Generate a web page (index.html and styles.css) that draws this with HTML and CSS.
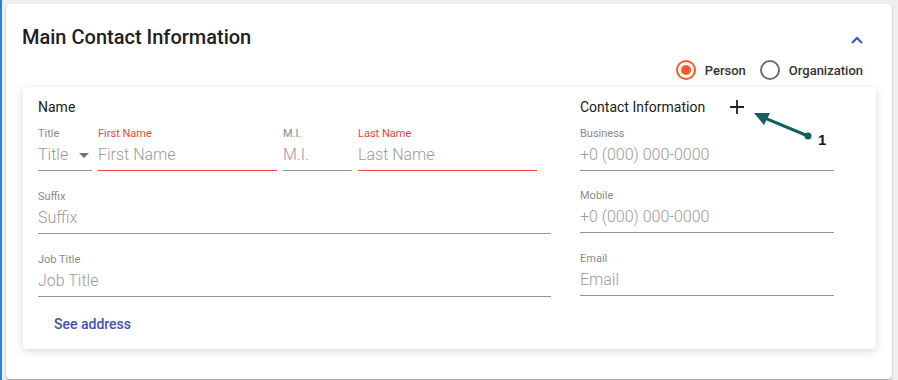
FILE: index.html
```html
<!DOCTYPE html>
<html lang="en">
<head>
    <meta charset="UTF-8">
    <meta name="viewport" content="width=device-width, initial-scale=1.0">
    <title>Main Contact Information</title>
    <link rel="stylesheet" href="styles.css">
</head>
<body>
    <div class="page">
        <div class="panel">
            <div class="panel-header">
                <h2>Main Contact Information</h2>
                <button class="collapse-btn" type="button" aria-label="Collapse">
                    <svg width="14" height="10" viewBox="0 0 14 10"><path d="M2 8 L7 3 L12 8" fill="none" stroke="#3f51b5" stroke-width="2"/></svg>
                </button>
            </div>

            <div class="type-row">
                <label class="radio checked"><span class="radio-dot"></span>Person</label>
                <label class="radio"><span class="radio-dot"></span>Organization</label>
            </div>

            <div class="card">
                <div class="col">
                    <div class="section-title">Name</div>
                    <div class="name-row">
                        <div class="field field-title">
                            <label>Title</label>
                            <div class="input">Title<span class="caret"></span></div>
                        </div>
                        <div class="field field-wide error">
                            <label>First Name</label>
                            <div class="input">First Name</div>
                        </div>
                        <div class="field field-mi">
                            <label>M.I.</label>
                            <div class="input">M.I.</div>
                        </div>
                        <div class="field field-wide error">
                            <label>Last Name</label>
                            <div class="input">Last Name</div>
                        </div>
                    </div>
                    <div class="field">
                        <label>Suffix</label>
                        <div class="input">Suffix</div>
                    </div>
                    <div class="field">
                        <label>Job Title</label>
                        <div class="input">Job Title</div>
                    </div>
                    <a class="link-btn" href="#">See address</a>
                </div>

                <div class="col">
                    <div class="section-title">Contact Information
                        <span class="add-btn">
                            <svg width="14" height="14" viewBox="0 0 14 14"><path d="M7 0 V14 M0 7 H14" stroke="#222" stroke-width="1.8"/></svg>
                        </span>
                    </div>
                    <div class="field">
                        <label>Business</label>
                        <div class="input">+0 (000) 000-0000</div>
                    </div>
                    <div class="field">
                        <label>Mobile</label>
                        <div class="input">+0 (000) 000-0000</div>
                    </div>
                    <div class="field">
                        <label>Email</label>
                        <div class="input">Email</div>
                    </div>
                </div>
            </div>
        </div>

        <!-- annotation callout -->
        <div class="callout">
            <svg width="80" height="40" viewBox="0 0 80 40">
                <line x1="60" y1="32" x2="14" y2="13" stroke="#135f61" stroke-width="3"/>
                <circle cx="60" cy="32" r="3.5" fill="#135f61"/>
                <polygon points="6,9 22,9 16,21" fill="#135f61"/>
            </svg>
            <span class="callout-num">1</span>
        </div>
    </div>
</body>
</html>
```

FILE: styles.css
```css
* {
    margin: 0;
    padding: 0;
    box-sizing: border-box;
}

body {
    font-family: Roboto, 'Liberation Sans', sans-serif;
    background: #efefef;
    color: #212121;
}

.page {
    position: relative;
    height: 380px;
    border-left: 2px solid #2584d9;
    padding: 4px 6px 0 4px;
}

.panel {
    background: white;
    border-radius: 4px;
    height: 375px;
    padding: 0 16px 0 16px;
    box-shadow: 0 1px 2px rgba(0,0,0,0.35);
}

.panel-header {
    display: flex;
    justify-content: space-between;
    align-items: center;
    height: 58px;
    padding-top: 8px;
}

.panel-header h2 {
    font-size: 20px;
    font-weight: 500;
    color: #212121;
}

.collapse-btn {
    background: none;
    border: none;
    margin-top: 6px;
    margin-right: 12px;
    display: flex;
}

.type-row {
    display: flex;
    justify-content: flex-end;
    gap: 14px;
    height: 16px;
    margin-bottom: 9px;
    margin-right: 13px;
    align-items: center;
}

.radio {
    display: flex;
    align-items: center;
    gap: 9px;
    font-size: 13px;
    font-weight: 500;
    color: #333;
}

.radio-dot {
    width: 20px;
    height: 20px;
    border: 2px solid #6e6e6e;
    border-radius: 50%;
    display: flex;
    align-items: center;
    justify-content: center;
}

.radio.checked .radio-dot {
    border-color: #ff5722;
}

.radio.checked .radio-dot::after {
    content: '';
    width: 10px;
    height: 10px;
    border-radius: 50%;
    background: #ff5722;
}

.card {
    margin: 0 0 0 1px;
    background: white;
    border-radius: 4px;
    box-shadow: 0 2px 8px rgba(0,0,0,0.16);
    padding: 10px 15px 15px 15px;
    display: grid;
    grid-template-columns: 513px 254px;
    column-gap: 29px;
}

.section-title {
    font-size: 14px;
    font-weight: 400;
    line-height: 20px;
    height: 20px;
    margin-bottom: 9px;
    color: #212121;
    display: flex;
    align-items: center;
}

.add-btn {
    margin-left: 25px;
    display: flex;
}

.name-row {
    display: flex;
    gap: 6px;
}

.field {
    margin-bottom: 17px;
}

.name-row + .field,
.field + .field {
    margin-bottom: 18px;
}

.name-row + .field + .field {
    margin-bottom: 17px;
}

.field label {
    display: block;
    font-size: 11px;
    line-height: 15px;
    color: #8a8a8a;
}

.field .input {
    position: relative;
    height: 30px;
    line-height: 28px;
    font-size: 16px;
    font-weight: 300;
    color: #9a9a9a;
    border-bottom: 1px solid #949494;
}

.field.error label {
    color: #f44336;
}

.field.error .input {
    border-bottom-color: #f44336;
}

.field-title {
    width: 54px;
}

.field-wide {
    width: 179px;
}

.field-mi {
    width: 69px;
}

.caret {
    position: absolute;
    right: 3px;
    top: 12px;
    border-left: 5px solid transparent;
    border-right: 5px solid transparent;
    border-top: 5px solid #757575;
}

.link-btn {
    display: inline-block;
    padding-left: 16px;
    font-size: 14px;
    font-weight: 500;
    line-height: 20px;
    color: #3f51b5;
    text-decoration: none;
}

.callout {
    position: absolute;
    left: 746px;
    top: 104px;
}

.callout svg {
    display: block;
}

.callout-num {
    position: absolute;
    left: 70px;
    top: 27px;
    font-family: 'Liberation Sans', sans-serif;
    font-size: 15px;
    font-weight: 700;
    color: #1a1a1a;
}
```
